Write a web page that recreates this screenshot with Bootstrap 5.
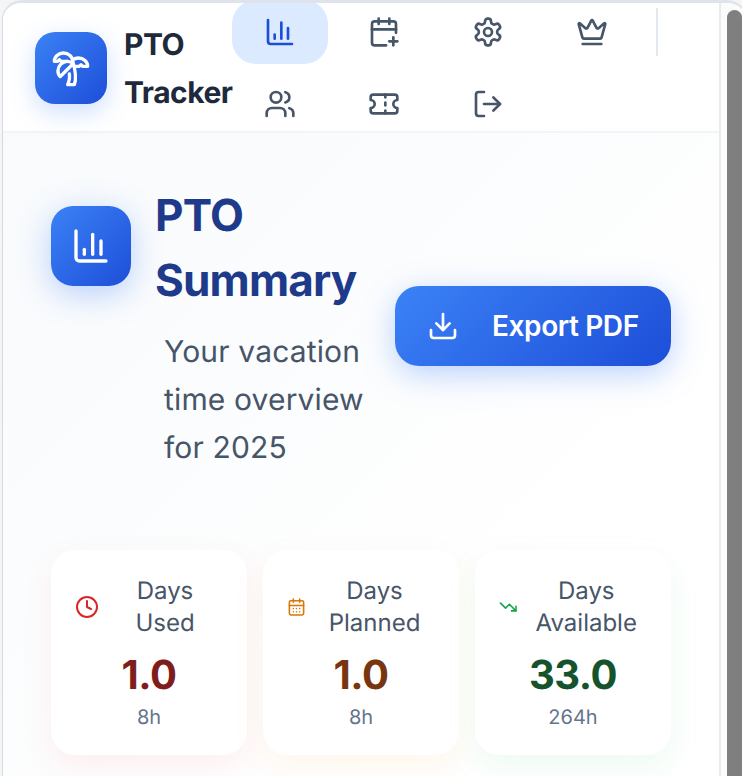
<!doctype html>
<html lang="en">
<head>
<meta charset="utf-8">
<title>PTO Tracker</title>
<link href="https://cdn.jsdelivr.net/npm/bootstrap@5.3.0/dist/css/bootstrap.min.css" rel="stylesheet">
<style>
html,body{height:776px;overflow:hidden}
body{background:#f4f5f7;font-family:Inter,"Liberation Sans",sans-serif;color:#1e293b;padding-left:2px;text-rendering:geometricPrecision}
svg{display:block;flex-shrink:0;fill:none;stroke:currentColor;stroke-width:2;stroke-linecap:round;stroke-linejoin:round}
.app-frame{width:745px;height:800px;border:1px solid #d6dae2;border-top:3px solid #dfe3ec;border-radius:20px;overflow:hidden;background:#fff}
.app-main{width:718px;height:100%;border-right:2px solid #ebebeb;flex-shrink:0}
.app-track{padding:7px 0 0 6px;background:#fbfbfb;flex-grow:1}
.app-thumb{width:15px;height:900px;background:#7f7f7f;border-radius:8px}
.app-head{height:130px;background:#fff;border-bottom:2px solid #f1f5f9;padding:2px 0 0 32px}
.logo-box{width:72px;height:72px;border-radius:20px;background:linear-gradient(135deg,#3b82f6,#1d4ed8);box-shadow:0 8px 24px rgba(59,130,246,.25);color:#fff}
.app-name{width:108px;font-size:30px;line-height:48px;font-weight:700;margin-left:17px;padding-top:2px;letter-spacing:-.5px;color:#1e293b}
.tab-wrap{width:432px;height:136px;flex-shrink:0;gap:8px;align-content:flex-start}
.tab-item{width:96px;height:64px;border-radius:24px;color:#475569}
.tab-on{background:#dbeafe;color:#1d4ed8}
.tab-rule{width:2px;height:48px;margin:8px 0 0 8px;background:#e2e8f0}
.app-body{height:700px;padding:50px 48px 0;background:linear-gradient(135deg,#f8fafc,#fff 70%)}
.head-left{width:344px;flex-shrink:0}
.head-badge{width:80px;height:80px;border-radius:22px;background:linear-gradient(135deg,#3b82f6,#1d4ed8);box-shadow:0 8px 32px rgba(59,130,246,.35);color:#fff;margin:0 24px 4px 0}
.head-title{font-size:44px;line-height:65px;font-weight:700;letter-spacing:-.8px;color:#1e3a8a;margin:0;width:215px}
.head-sub{font-size:30px;line-height:48px;letter-spacing:.15px;color:#475569;margin:15px 0 0 113px;width:215px}
.pdf-btn{width:276px;height:80px;border:0;border-radius:24px;background:linear-gradient(135deg,#3b82f6,#1d4ed8);box-shadow:0 8px 32px rgba(59,130,246,.35);color:#fff;font-size:28px;font-weight:600;letter-spacing:-.4px;padding:0 0 0 32px;gap:33px;white-space:nowrap;margin-bottom:3px}
.stat-row{margin-top:78px;gap:16px}
.stat-box{width:196px;height:205px;border-radius:24px;background:#fff;padding:25px 24px 0}
.stat-red{box-shadow:0 12px 32px rgba(239,68,68,.08)}
.stat-amber{box-shadow:0 12px 32px rgba(245,158,11,.08)}
.stat-green{box-shadow:0 12px 32px rgba(34,197,94,.08)}
.stat-label{font-size:24px;line-height:31.5px;color:#475569;text-align:center;flex-grow:1}
.stat-val{font-size:40px;line-height:56px;font-weight:700;letter-spacing:-.5px;text-align:center;margin-top:9px}
.stat-hrs{font-size:20px;line-height:28px;color:#64748b;text-align:center}
.tone-red{color:#dc2626}.tone-amber{color:#d97706}.tone-green{color:#16a34a}
.val-red{color:#7f1d1d}.val-amber{color:#78350f}.val-green{color:#14532d}
</style>
</head>
<body>
<div class="app-frame d-flex">
  <div class="app-main">
    <header class="app-head d-flex align-items-center">
      <div class="logo-box d-flex align-items-center justify-content-center flex-shrink-0">
        <svg width="40" height="40" viewBox="0 0 24 24"><path d="M13 8c0-2.76-2.46-5-5.5-5S2 5.24 2 8h2l1-1 1 1h4"/><path d="M13 7.14A5.82 5.82 0 0 1 16.5 6c3.04 0 5.5 2.24 5.5 5h-3l-1-1-1 1h-3"/><path d="M5.89 9.71c-2.15 2.15-2.3 5.47-.35 7.43l4.24-4.25.7-.7.71-.71 2.12-2.12c-1.95-1.96-5.27-1.8-7.42.35"/><path d="M11 15.5c.5 2.5-.17 4.5-1 6.5h4c2-5.5-.5-12-1-14"/></svg>
      </div>
      <div class="app-name flex-shrink-0">PTO Tracker</div>
      <nav class="tab-wrap d-flex flex-wrap">
        <a class="tab-item tab-on d-flex align-items-center justify-content-center"><svg width="32" height="32" viewBox="0 0 24 24"><path d="M3 3v16a2 2 0 0 0 2 2h16"/><path d="M18 17V9"/><path d="M13 17V5"/><path d="M8 17v-3"/></svg></a>
        <a class="tab-item d-flex align-items-center justify-content-center"><svg width="32" height="32" viewBox="0 0 24 24"><path d="M16 19h6"/><path d="M16 2v4"/><path d="M19 16v6"/><path d="M21 12.598V6a2 2 0 0 0-2-2H5a2 2 0 0 0-2 2v14a2 2 0 0 0 2 2h8.598"/><path d="M3 10h18"/><path d="M8 2v4"/></svg></a>
        <a class="tab-item d-flex align-items-center justify-content-center"><svg width="32" height="32" viewBox="0 0 24 24"><path d="M12.22 2h-.44a2 2 0 0 0-2 2v.18a2 2 0 0 1-1 1.73l-.43.25a2 2 0 0 1-2 0l-.15-.08a2 2 0 0 0-2.73.73l-.22.38a2 2 0 0 0 .73 2.73l.15.1a2 2 0 0 1 1 1.72v.51a2 2 0 0 1-1 1.74l-.15.09a2 2 0 0 0-.73 2.73l.22.38a2 2 0 0 0 2.73.73l.15-.08a2 2 0 0 1 2 0l.43.25a2 2 0 0 1 1 1.73V20a2 2 0 0 0 2 2h.44a2 2 0 0 0 2-2v-.18a2 2 0 0 1 1-1.73l.43-.25a2 2 0 0 1 2 0l.15.08a2 2 0 0 0 2.73-.73l.22-.39a2 2 0 0 0-.73-2.73l-.15-.08a2 2 0 0 1-1-1.74v-.5a2 2 0 0 1 1-1.74l.15-.09a2 2 0 0 0 .73-2.73l-.22-.38a2 2 0 0 0-2.73-.73l-.15.08a2 2 0 0 1-2 0l-.43-.25a2 2 0 0 1-1-1.73V4a2 2 0 0 0-2-2z"/><circle cx="12" cy="12" r="3"/></svg></a>
        <a class="tab-item d-flex align-items-center justify-content-center"><svg width="32" height="32" viewBox="0 0 24 24"><path d="M11.562 3.266a.5.5 0 0 1 .876 0L15.39 8.87a1 1 0 0 0 1.516.294L21.183 5.5a.5.5 0 0 1 .798.519l-2.834 10.246a1 1 0 0 1-.956.734H5.81a1 1 0 0 1-.957-.734L2.02 6.02a.5.5 0 0 1 .798-.519l4.276 3.664a1 1 0 0 0 1.516-.294z"/><path d="M5 21h14"/></svg></a>
        <div class="tab-rule"></div>
        <a class="tab-item d-flex align-items-center justify-content-center"><svg width="32" height="32" viewBox="0 0 24 24"><path d="M16 21v-2a4 4 0 0 0-4-4H6a4 4 0 0 0-4 4v2"/><circle cx="9" cy="7" r="4"/><path d="M22 21v-2a4 4 0 0 0-3-3.87"/><path d="M16 3.13a4 4 0 0 1 0 7.75"/></svg></a>
        <a class="tab-item d-flex align-items-center justify-content-center"><svg width="32" height="32" viewBox="0 0 24 24"><path d="M2 9a3 3 0 0 1 0 6v2a2 2 0 0 0 2 2h16a2 2 0 0 0 2-2v-2a3 3 0 0 1 0-6V7a2 2 0 0 0-2-2H4a2 2 0 0 0-2 2Z"/><path d="M13 5v2"/><path d="M13 17v2"/><path d="M13 11v2"/></svg></a>
        <a class="tab-item d-flex align-items-center justify-content-center"><svg width="32" height="32" viewBox="0 0 24 24"><path d="M9 21H5a2 2 0 0 1-2-2V5a2 2 0 0 1 2-2h4"/><path d="m16 17 5-5-5-5"/><path d="M21 12H9"/></svg></a>
      </nav>
    </header>
    <main class="app-body">
      <section class="d-flex align-items-center">
        <div class="head-left">
          <div class="d-flex align-items-center">
            <div class="head-badge d-flex align-items-center justify-content-center flex-shrink-0"><svg width="40" height="40" viewBox="0 0 24 24"><path d="M3 3v16a2 2 0 0 0 2 2h16"/><path d="M18 17V9"/><path d="M13 17V5"/><path d="M8 17v-3"/></svg></div>
            <h1 class="head-title">PTO Summary</h1>
          </div>
          <p class="head-sub mb-0">Your vacation time overview for 2025</p>
        </div>
        <button class="pdf-btn d-flex align-items-center flex-shrink-0" type="button"><svg width="32" height="32" viewBox="0 0 24 24"><path d="M21 15v4a2 2 0 0 1-2 2H5a2 2 0 0 1-2-2v-4"/><polyline points="7 10 12 15 17 10"/><line x1="12" y1="15" x2="12" y2="3"/></svg>Export PDF</button>
      </section>
      <section class="stat-row d-flex">
        <div class="stat-box stat-red">
          <div class="d-flex align-items-center gap-2"><svg class="tone-red" width="24" height="24" viewBox="0 0 24 24"><circle cx="12" cy="12" r="10"/><polyline points="12 6 12 12 16 14"/></svg><div class="stat-label">Days Used</div></div>
          <div class="stat-val val-red">1.0</div>
          <div class="stat-hrs">8h</div>
        </div>
        <div class="stat-box stat-amber">
          <div class="d-flex align-items-center gap-2"><svg class="tone-amber" width="19" height="24" viewBox="0 0 24 24"><path d="M8 2v4"/><path d="M16 2v4"/><rect width="18" height="18" x="3" y="4" rx="2"/><path d="M3 10h18"/><path d="M8 14h.01"/><path d="M12 14h.01"/><path d="M16 14h.01"/><path d="M8 18h.01"/><path d="M12 18h.01"/><path d="M16 18h.01"/></svg><div class="stat-label">Days Planned</div></div>
          <div class="stat-val val-amber">1.0</div>
          <div class="stat-hrs">8h</div>
        </div>
        <div class="stat-box stat-green">
          <div class="d-flex align-items-center gap-2"><svg class="tone-green" width="18.5" height="24" viewBox="0 0 24 24"><path d="M16 17h6v-6"/><path d="m22 17-8.5-8.5-5 5L2 7"/></svg><div class="stat-label">Days Available</div></div>
          <div class="stat-val val-green">33.0</div>
          <div class="stat-hrs">264h</div>
        </div>
      </section>
    </main>
  </div>
  <div class="app-track"><div class="app-thumb"></div></div>
</div>
<script src="https://cdn.jsdelivr.net/npm/bootstrap@5.3.0/dist/js/bootstrap.bundle.min.js"></script>
</body>
</html>
